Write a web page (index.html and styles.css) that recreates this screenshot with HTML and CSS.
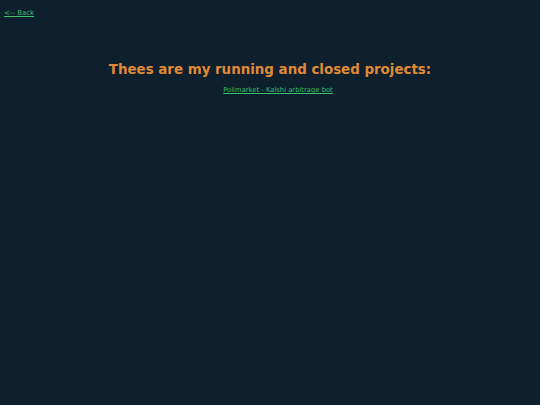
FILE: index.html
```html
<!DOCTYPE html>
<html lang="en">
<head>
<meta charset="utf-8">
<title>Projects</title>
<link rel="stylesheet" href="styles.css">
</head>
<body>
<nav class="top">
  <a class="back" href="#">&lt;-- Back</a>
</nav>
<main class="content">
  <h1 class="title">Thees are my running and closed projects:</h1>
  <ul class="projects">
    <li><a href="#">Polimarket - Kalshi arbitrage bot</a></li>
  </ul>
</main>
</body>
</html>
```
FILE: styles.css
```css
html, body {
  margin: 0;
  padding: 0;
  height: 100%;
}
body {
  background: #0e1f2e;
  font-family: "DejaVu Sans", Verdana, sans-serif;
  color: #d0d0d0;
}
a {
  color: #3bbf68;
}
.top {
  padding: 8px 4px 0;
  font-size: 7px;
  line-height: 10px;
}
.content {
  text-align: center;
}
.title {
  margin: 43px 0 0;
  font-size: 13.4px;
  line-height: 17px;
  color: #e08a35;
}
.projects {
  list-style: none;
  margin: 7px 0 0;
  padding: 0 0 0 16px;
  font-size: 6.8px;
  line-height: 10px;
}
```
